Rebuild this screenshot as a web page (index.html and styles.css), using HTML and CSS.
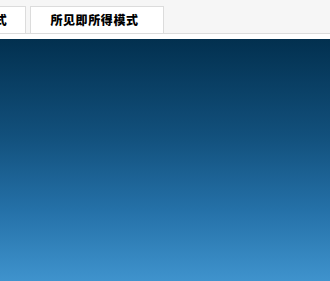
FILE: index.html
```html
<!DOCTYPE html>
<html lang="zh">
<head>
<meta charset="utf-8">
<link rel="stylesheet" href="styles.css">
</head>
<body>
<div class="page">
  <div class="tabbar">
    <div class="tab tab-first">源码模式</div>
    <div class="tab tab-active">所见即所得模式</div>
  </div>
  <div class="spacer"></div>
  <div class="canvas"></div>
</div>
</body>
</html>
```
FILE: styles.css
```css
html, body {
  margin: 0;
  padding: 0;
  height: 100%;
  background: #fff;
}
.page {
  display: flex;
  flex-direction: column;
  height: 281px;
  font-family: "Noto Sans CJK SC", "Liberation Sans", sans-serif;
}
.tabbar {
  display: flex;
  align-items: flex-end;
  gap: 4px;
  height: 27px;
  padding-top: 6px;
  background: #f6f6f6;
  border-bottom: 1px solid #dcdcdc;
  overflow: hidden;
  flex: none;
}
.tab {
  box-sizing: border-box;
  height: 27px;
  line-height: 25px;
  border: 1px solid #dcdcdc;
  border-bottom: none;
  background: #fff;
  font-size: 12px;
  font-weight: 900;
  letter-spacing: 0.6px;
  color: #000;
  white-space: nowrap;
  flex: none;
}
.tab-first {
  padding: 0 18px 0 20px;
  margin-left: -64px;
}
.tab-active {
  width: 134px;
  height: 28px;
  margin-bottom: -1px;
  padding-left: 19px;
}
.spacer {
  height: 5px;
  flex: none;
}
.canvas {
  flex: 1;
  background: linear-gradient(to bottom, #02304f 0%, #12507c 40%, #2470a7 70%, #3f93cd 100%);
}
```
